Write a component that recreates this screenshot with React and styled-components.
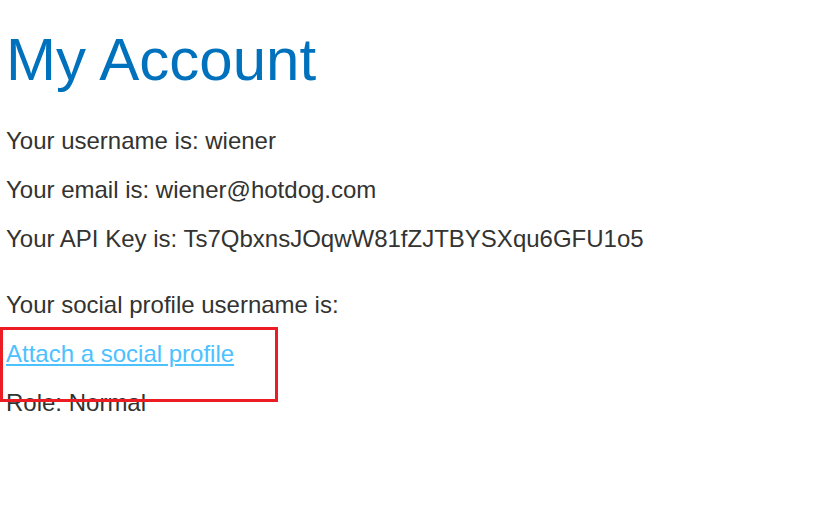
import React from "react";
import { styled, createGlobalStyle } from "styled-components";

const account = {
  username: "wiener",
  email: "wiener@hotdog.com",
  apiKey: "Ts7QbxnsJOqwW81fZJTBYSXqu6GFU1o5",
  role: "Normal",
};

const App = () => {
  return (
    <>
      <GlobalStyle />
      <Page>
        <Title>My Account</Title>
        <Line>Your username is: {account.username}</Line>
        <Line>Your email is: {account.email}</Line>
        <Line>Your API Key is: {account.apiKey}</Line>
        <Social>
          <Line>Your social profile username is: </Line>
          <Line>
            <ProfileLink href="#">Attach a social profile</ProfileLink>
          </Line>
          <Line>Role: {account.role}</Line>
          <Highlight />
        </Social>
      </Page>
    </>
  );
};

export default App;

const GlobalStyle = createGlobalStyle`
  html, body {
    margin: 0;
    padding: 0;
    background: #fff;
  }
`;

const Page = styled.div`
  padding: 0 6px;
  font-family: "Liberation Sans", Arial, sans-serif;
  color: #333332;
`;

const Title = styled.h1`
  margin: 0 0 33px;
  padding-top: 25px;
  font-size: 60px;
  font-weight: 400;
  line-height: 70px;
  color: #0071bc;
`;

const Line = styled.p`
  margin: 0 0 24px;
  font-size: 24px;
  line-height: 25px;
`;

const Social = styled.div`
  position: relative;
  margin-top: 41px;
`;

const ProfileLink = styled.a`
  color: #4cc1ff;
  text-decoration: underline;
`;

const Highlight = styled.div`
  position: absolute;
  left: -6px;
  top: 35px;
  width: 272px;
  height: 69px;
  border: 3px solid #ec1c24;
  pointer-events: none;
`;
